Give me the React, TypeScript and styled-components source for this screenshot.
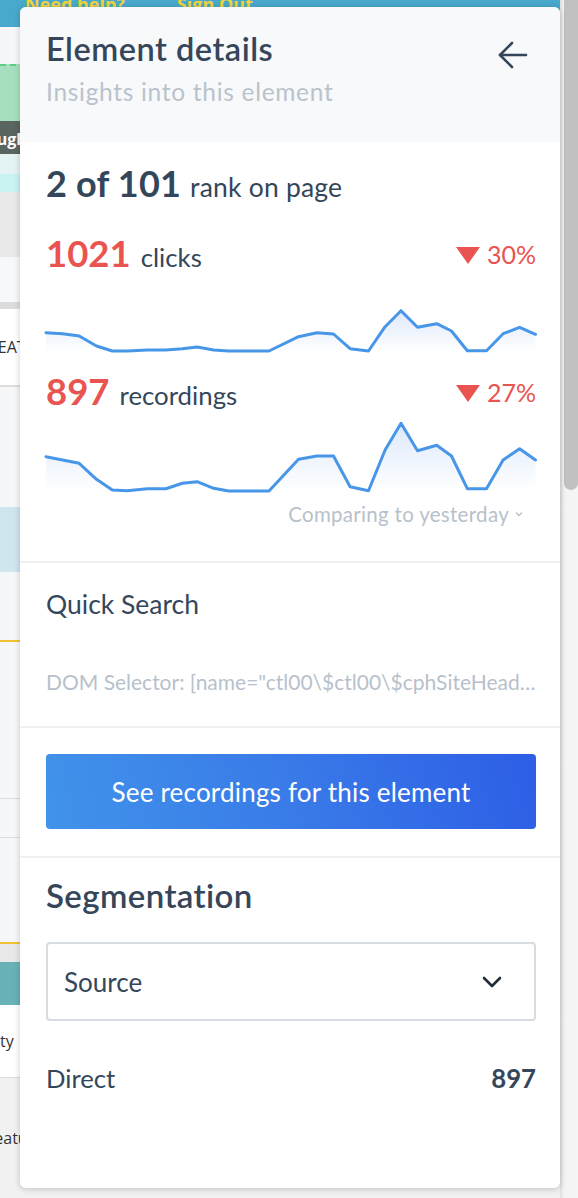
import styled, { createGlobalStyle } from 'styled-components';

const GlobalStyle = createGlobalStyle`
  html, body {
    margin: 0;
    padding: 0;
    overflow: hidden;
    background: #f6f7f9;
  }
  * {
    box-sizing: border-box;
  }
`;

const FONT = `Lato, "Open Sans", "Liberation Sans", sans-serif`;

// strips of the page that sits behind the panel (only its edges show)
const strips = [
  { h: 37, bg: '#f6f7f9' },
  { h: 57, bg: '#a6dfbd', line: '#5ccf86' },
  { h: 33, bg: '#5a6560', text: 'Bugle', dark: true },
  { h: 20, bg: '#e4f3f3' },
  { h: 18, bg: '#c9f3f3' },
  { h: 65, bg: '#e9e9e9' },
  { h: 45, bg: '#f7f8fa' },
  { h: 7, bg: '#dcdcdc' },
  { h: 76, bg: '#ffffff', text: 'HEAT' },
  { h: 2, bg: '#dddddd' },
  { h: 120, bg: '#f6f7f9' },
  { h: 65, bg: '#cfe6ef' },
  { h: 68, bg: '#f6f7f9' },
  { h: 2, bg: '#f1c232' },
  { h: 156, bg: '#f6f7f9' },
  { h: 1, bg: '#dddddd' },
  { h: 38, bg: '#f6f7f9' },
  { h: 1, bg: '#dddddd' },
  { h: 104, bg: '#f6f7f9' },
  { h: 2, bg: '#f1c232' },
  { h: 18, bg: '#e8e8e8' },
  { h: 43, bg: '#68b2b7' },
  { h: 72, bg: '#ffffff', text: 'City' },
  { h: 1, bg: '#dddddd' },
  { h: 120, bg: '#f1f1f1', text: 'Feature' },
];

// chart points, x in px across 490, y in px from the chart's top
const clicks: [number, number][] = [
  [0, 32.7], [16.6, 33.7], [33.2, 36], [50.5, 46], [66.3, 51], [81.1, 51],
  [101.4, 50], [119.8, 50], [136.4, 48.7], [151.1, 47], [167.7, 50], [182.5, 51],
  [223, 51], [252.5, 36.7], [270.9, 32.7], [287.5, 34], [304.1, 48.7], [322.5, 51],
  [339.1, 26.7], [355, 10.7], [371.5, 27.3], [390.7, 23.7], [405.5, 31], [421.3, 50.7],
  [440.5, 50.7], [457.1, 33.7], [473.6, 27.3], [489.5, 34.3],
];

const recordings: [number, number][] = [
  [0, 36.7], [16.6, 40], [33.2, 43.3], [50.5, 59.3], [66.3, 70], [81.1, 70.7],
  [101.4, 68.7], [119.8, 68.7], [136.4, 63.3], [151.1, 61.7], [167.7, 68.3], [182.5, 71],
  [223, 71], [252.5, 39.3], [270.9, 36], [287.5, 36], [304.1, 66.7], [322.5, 70.7],
  [339.1, 30], [355, 3.3], [371.5, 30.7], [390.7, 25.3], [405.5, 36], [421.3, 68.7],
  [440.5, 68.7], [457.1, 40], [473.6, 28.7], [489.5, 40],
];

const Screen = styled.div`
  position: relative;
  display: flex;
  width: 100vw;
  height: 100vh;
  overflow: hidden;
`;

const BackPage = styled.div`
  flex: 1;
  display: flex;
  flex-direction: column;
  font-family: "Open Sans", "Liberation Sans", sans-serif;
`;

const TopBar = styled.div`
  height: 35px;
  background: #48a9cc;
  display: flex;
  gap: 52px;
  padding-left: 25px;
  align-items: flex-start;
`;

const TopLink = styled.span`
  margin-top: -8px;
  color: #f2d33c;
  font-weight: 700;
  font-size: 18px;
`;

const Strip = styled.div<{ $h: number; $bg: string; $line?: string; $dark?: boolean }>`
  flex: none;
  height: ${(p) => p.$h}px;
  background: ${(p) => p.$bg};
  border-top: ${(p) => (p.$line ? `2px dashed ${p.$line}` : 'none')};
  display: flex;
  align-items: ${(p) => (p.$dark ? 'flex-end' : 'center')};
  padding-bottom: ${(p) => (p.$dark ? 4 : 0)}px;
  overflow: hidden;
  color: ${(p) => (p.$dark ? '#ffffff' : '#333333')};
  font-weight: ${(p) => (p.$dark ? 700 : 400)};
  font-size: 16px;
  white-space: nowrap;
`;

const StripText = styled.span`
  margin-left: -14px;
`;

const Scrollbar = styled.div`
  flex: none;
  width: 18px;
  background: linear-gradient(to right, #dedede, #f3f3f3 4px, #f5f5f5);
  padding-left: 4px;
`;

const Thumb = styled.div`
  width: 14px;
  height: 490px;
  background: #c1c1c1;
  border-radius: 0 0 7px 7px;
`;

const Panel = styled.aside`
  position: absolute;
  left: 20px;
  top: 7px;
  width: 540px;
  height: 1181px;
  background: #ffffff;
  border-radius: 6px;
  box-shadow: 0 1px 6px rgba(0, 0, 0, 0.2);
  overflow: hidden;
  font-family: ${FONT};
  color: #34465a;
  display: flex;
  flex-direction: column;
`;

const Header = styled.header`
  flex: none;
  height: 135px;
  background: #f7f9fb;
  padding: 23px 32px 0 26px;
  display: flex;
  justify-content: space-between;
  align-items: flex-start;
`;

const Title = styled.h1`
  margin: 0;
  font-size: 32.5px;
  line-height: 38px;
  font-weight: 600;
  letter-spacing: 0.5px;
  color: #36465a;
`;

const Subtitle = styled.p`
  margin: 9px 0 0;
  font-size: 24.5px;
  line-height: 30px;
  letter-spacing: 0.7px;
  color: #b9c3cc;
`;

const BackButton = styled.button`
  border: none;
  background: none;
  padding: 0;
  margin-top: 11px;
  cursor: pointer;
  display: flex;
`;

const Section = styled.section<{ $pt: number; $pb: number; $last?: boolean }>`
  flex: none;
  padding: ${(p) => p.$pt}px 24px ${(p) => p.$pb}px 26px;
  border-bottom: ${(p) => (p.$last ? 'none' : '2px solid #eef0f2')};
`;

const Rank = styled.div`
  font-size: 26.5px;
  line-height: 40px;
  letter-spacing: 0.2px;
  color: #34465a;

  strong {
    font-size: 36px;
    font-weight: 700;
    margin-right: 9px;
  }
`;

const MetricRow = styled.div<{ $mt: number }>`
  margin-top: ${(p) => p.$mt}px;
  display: flex;
  justify-content: space-between;
  align-items: baseline;
  line-height: 40px;
`;

const MetricValue = styled.div`
  font-size: 25.8px;

  strong {
    color: #ea5450;
    font-size: 36.5px;
    font-weight: 700;
    margin-right: 10px;
  }
`;

const Change = styled.div`
  display: flex;
  align-items: baseline;
  gap: 7px;
  color: #ea5450;
  font-size: 25px;
  transform: translateY(-3px);
`;

const Triangle = styled.span`
  width: 0;
  height: 0;
  border-left: 12.5px solid transparent;
  border-right: 12.5px solid transparent;
  border-top: 17px solid #ea5450;
`;

const ChartBox = styled.svg<{ $mt: number }>`
  display: block;
  margin-top: ${(p) => p.$mt}px;
  overflow: visible;
`;

const Compare = styled.div`
  margin-top: 10px;
  padding-right: 13px;
  display: flex;
  justify-content: flex-end;
  align-items: center;
  gap: 6px;
  font-size: 20.5px;
  line-height: 24px;
  letter-spacing: 0.3px;
  color: #b7c1cb;
`;

const Label = styled.div`
  font-size: 26.5px;
  line-height: 32px;
  color: #34465a;
`;

const Selector = styled.div`
  margin-top: 49px;
  font-size: 21px;
  line-height: 26px;
  color: #b7c1cb;
  white-space: nowrap;
  overflow: hidden;
  text-overflow: ellipsis;
`;

const PrimaryButton = styled.button`
  display: block;
  width: 100%;
  height: 75px;
  border: none;
  border-radius: 4px;
  background: linear-gradient(75deg, #4193ea 0%, #3a7de8 45%, #2d5ee6 100%);
  color: #ffffff;
  font-family: ${FONT};
  font-size: 26px;
  letter-spacing: 0.2px;
  cursor: pointer;
`;

const SectionTitle = styled.h2`
  margin: 0;
  font-size: 33px;
  line-height: 38px;
  font-weight: 600;
  letter-spacing: 0.4px;
  color: #36465a;
`;

const Select = styled.div`
  margin-top: 28px;
  height: 79px;
  border: 2px solid #d6dce1;
  border-radius: 4px;
  padding: 0 32px 0 16px;
  display: flex;
  justify-content: space-between;
  align-items: center;
  font-size: 26px;
  color: #34465a;
`;

const SegmentRow = styled.div`
  margin-top: 42px;
  display: flex;
  justify-content: space-between;
  font-size: 25.7px;
  line-height: 30px;

  strong {
    font-weight: 700;
  }
`;

const Sparkline = ({ id, points, height, mt }: { id: string; points: [number, number][]; height: number; mt: number }) => {
  const line = points.map(([x, y], i) => `${i ? 'L' : 'M'}${x} ${y}`).join(' ');
  const last = points[points.length - 1][0];
  const area = `${line} L${last} ${height} L0 ${height} Z`;
  return (
    <ChartBox $mt={mt} width="490" height={height} viewBox={`0 0 490 ${height}`}>
      <defs>
        <linearGradient id={id} x1="0" y1="0" x2="0" y2="1">
          <stop offset="0" stopColor="#dde9fa" />
          <stop offset="1" stopColor="#ffffff" />
        </linearGradient>
      </defs>
      <path d={area} fill={`url(#${id})`} />
      <path d={line} fill="none" stroke="#4896e8" strokeWidth="3" strokeLinejoin="round" strokeLinecap="round" />
    </ChartBox>
  );
};

const App = () => {
  return (
    <Screen>
      <GlobalStyle />
      <BackPage>
        <TopBar>
          <TopLink>Need help?</TopLink>
          <TopLink>Sign Out</TopLink>
        </TopBar>
        {strips.map((s, i) => (
          <Strip key={i} $h={s.h} $bg={s.bg} $line={s.line} $dark={s.dark}>
            {s.text && <StripText>{s.text}</StripText>}
          </Strip>
        ))}
      </BackPage>
      <Scrollbar>
        <Thumb />
      </Scrollbar>

      <Panel>
        <Header>
          <div>
            <Title>Element details</Title>
            <Subtitle>Insights into this element</Subtitle>
          </div>
          <BackButton aria-label="Back">
            <svg width="30" height="28" viewBox="0 0 30 28" fill="none" stroke="#36465a" strokeWidth="2.6" strokeLinecap="round" strokeLinejoin="round">
              <path d="M28 14H2" />
              <path d="M14 2 2 14l12 12" />
            </svg>
          </BackButton>
        </Header>

        <Section $pt={21} $pb={35}>
          <Rank>
            <strong>2 of 101</strong>rank on page
          </Rank>
          <MetricRow $mt={26}>
            <MetricValue>
              <strong>1021</strong>clicks
            </MetricValue>
            <Change>
              <Triangle />
              30%
            </Change>
          </MetricRow>
          <Sparkline id="clicksFill" points={clicks} height={52} mt={23} />
          <MetricRow $mt={19}>
            <MetricValue>
              <strong>897</strong>recordings
            </MetricValue>
            <Change>
              <Triangle />
              27%
            </Change>
          </MetricRow>
          <Sparkline id="recFill" points={recordings} height={72} mt={5} />
          <Compare>
            Comparing to yesterday
            <svg width="8" height="6" viewBox="0 0 8 6" fill="none" stroke="#b7c1cb" strokeWidth="1.3">
              <path d="M1 1.5 4 4.5 7 1.5" />
            </svg>
          </Compare>
        </Section>

        <Section $pt={25} $pb={31}>
          <Label>Quick Search</Label>
          <Selector>DOM Selector: [name="ctl00\$ctl00\$cphSiteHeader$ctl00$btnSearchSubmit"]</Selector>
        </Section>

        <Section $pt={26} $pb={27}>
          <PrimaryButton>See recordings for this element</PrimaryButton>
        </Section>

        <Section $pt={18} $pb={0} $last>
          <SectionTitle>Segmentation</SectionTitle>
          <Select>
            Source
            <svg width="20" height="12" viewBox="0 0 20 12" fill="none" stroke="#222d3a" strokeWidth="2.6" strokeLinecap="round" strokeLinejoin="round">
              <path d="M2 2l8 8 8-8" />
            </svg>
          </Select>
          <SegmentRow>
            Direct
            <strong>897</strong>
          </SegmentRow>
        </Section>
      </Panel>
    </Screen>
  );
};

export default App;
